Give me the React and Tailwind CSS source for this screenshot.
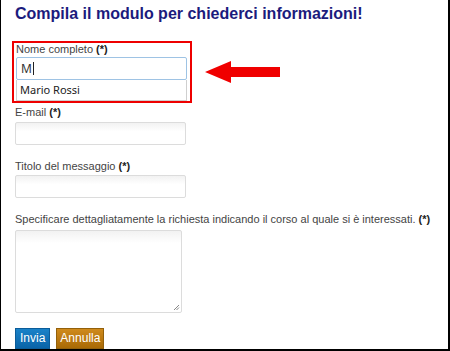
import React from 'react';

const LABEL = 'text-[11px] leading-[13px] text-[#444]';

const Label = ({ children }) => (
  <div className={LABEL}>
    {children} <b className="text-[#222]">(*)</b>
  </div>
);

const Field = () => (
  <div className="w-[171px] h-[23px] border border-[#dcdcdc] rounded-[2px] bg-gradient-to-b from-[#f2f2f2] to-white to-[40%]" />
);

export default function App() {
  return (
    <div className="w-[450px] h-[351px] bg-white border-l border-r-2 border-b-2 border-black font-['Liberation_Sans',Arial,sans-serif] overflow-hidden">
      <div className="pl-[14px] pt-[3px]">
        <h1 className="text-[16px] leading-[22px] font-bold text-[#1b1b7d]">
          Compila il modulo per chiederci informazioni!
        </h1>

        <div className="flex items-center mt-[16px] -ml-[3px]">
          <div className="w-[180px] h-[62px] border-2 border-[#ee0000] pl-[2px]">
            <Label>Nome completo</Label>
            <div className="mt-[1px] w-[171px] h-[23px] border border-[#9ec3e4] rounded-[2px] flex items-center pl-[4px] text-[12px] text-[#333] font-['Noto_Sans',sans-serif]">
              M<span className="inline-block w-px h-[13px] bg-[#222] ml-px" />
            </div>
            <div className="w-[171px] h-[21px] border border-t-0 border-[#cfcfcf] flex items-center pl-[3px] text-[11px] text-[#222] font-['Noto_Sans',sans-serif]">
              Mario Rossi
            </div>
          </div>
          <svg width="80" height="24" viewBox="0 0 80 24" className="ml-[11px]">
            <polygon points="2,12 28,1 28,7 77,7 77,17 28,17 28,23" fill="#f00000" />
          </svg>
        </div>

        <div className="mt-[3px]">
          <Label>E-mail</Label>
          <div className="mt-[3px]"><Field /></div>
        </div>

        <div className="mt-[15px]">
          <Label>Titolo del messaggio</Label>
          <div className="mt-[2px]"><Field /></div>
        </div>

        <div className="mt-[15px]">
          <Label>Specificare dettagliatamente la richiesta indicando il corso al quale si è interessati.</Label>
          <div className="mt-[4px] relative w-[167px] h-[83px] border border-[#dcdcdc] rounded-[2px] bg-gradient-to-b from-[#f2f2f2] to-white to-[15%]">
            <svg width="7" height="7" viewBox="0 0 7 7" className="absolute right-[1px] bottom-[1px]">
              <path d="M6 1L1 6M6 3.5L3.5 6" stroke="#888" strokeWidth="1" />
            </svg>
          </div>
        </div>

        <div className="flex gap-[6px] mt-[15px]">
          <button className="h-[21px] px-[4px] bg-gradient-to-b from-[#1a82c8] to-[#0a64a8] text-white text-[12px] leading-[19px] border border-[#0b5c99]">
            Invia
          </button>
          <button className="h-[21px] px-[3px] bg-gradient-to-b from-[#cf8a1c] to-[#a96a05] text-white text-[12px] leading-[19px] border border-[#93600a]">
            Annulla
          </button>
        </div>
      </div>
    </div>
  );
}
